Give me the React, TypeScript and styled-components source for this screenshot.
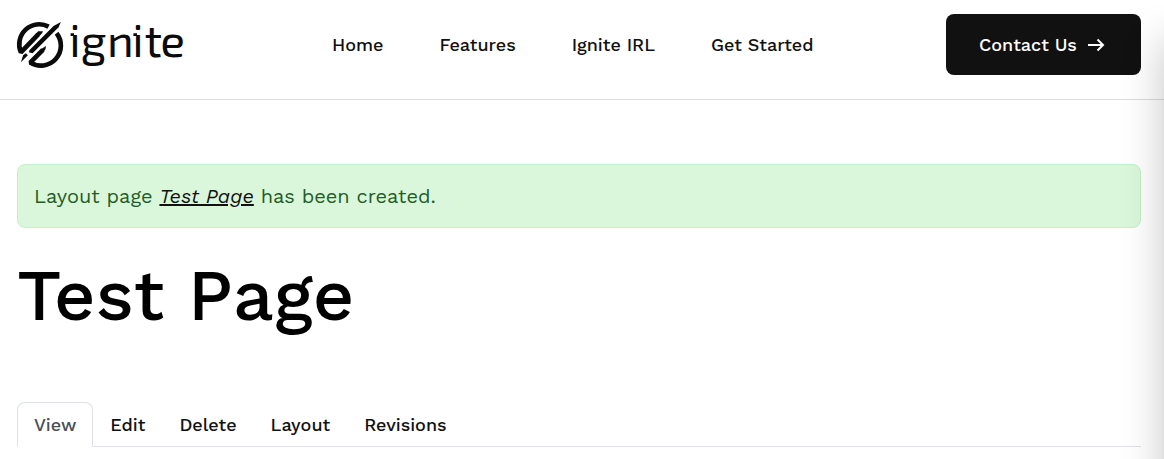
import React from 'react';
import styled, { createGlobalStyle } from 'styled-components';

const Global = createGlobalStyle`
  * { box-sizing: border-box; }
  html, body { margin: 0; height: 100%; overflow: hidden; background: #fff; }
  body { font-family: "Work Sans", "Open Sans", "Liberation Sans", sans-serif; color: #111; }
  a { color: inherit; text-decoration: none; }
`;

const Page = styled.div`
  height: 459px;
  overflow: hidden;
`;

const Header = styled.header`
  display: flex;
  align-items: flex-start;
  height: 100px;
  padding: 14px 23px 0 17px;
  border-bottom: 1px solid #dcdcdc;
`;

const LogoLink = styled.a`
  display: block;
  width: 170px;
  height: 60px;
  svg { display: block; overflow: visible; }
`;

const Nav = styled.nav`
  display: flex;
  gap: 56px;
  margin-left: 145px;
  height: 61px;
  align-items: center;
`;

const Label = styled.a`
  white-space: nowrap;
  font-size: 18px;
  font-weight: 480;
  line-height: 28px;
`;

const Button = styled.a`
  display: flex;
  align-items: center;
  gap: 10px;
  margin-left: auto;
  width: 195px;
  height: 61px;
  padding-left: 33px;
  border-radius: 8px;
  background: #111;
  color: #fff;
`;

const Main = styled.main`
  padding: 64px 23px 0 17px;
`;

const Alert = styled.div`
  height: 64px;
  padding: 0 16px;
  border: 1px solid #c4f0c6;
  border-radius: 8px;
  background: #daf7db;
  color: #235c26;
  font-size: 20px;
  line-height: 63px;
  white-space: nowrap;
`;

const PageLink = styled.a`
  && { color: #111; text-decoration: underline; }
  font-style: italic;
`;

const Title = styled.h1`
  margin: 15px 0 0;
  height: 105px;
  color: #000;
  font-size: 72px;
  font-weight: 500;
  line-height: 105px;
  white-space: nowrap;
`;

const Tabs = styled.div`
  display: flex;
  height: 45px;
  margin-top: 54px;
  border-bottom: 1px solid #dee2e6;
`;

const Tab = styled.div<{ $active?: boolean }>`
  height: 45px;
  padding: 8px 16px;
  border: 1px solid ${p => (p.$active ? '#dee2e6' : 'transparent')};
  border-bottom-color: ${p => (p.$active ? '#fff' : 'transparent')};
  border-radius: 8px 8px 0 0;
  color: ${p => (p.$active ? '#495057' : '#111')};
`;

const SidePanel = styled.aside`
  position: fixed;
  top: 40px;
  left: 1164px;
  width: 400px;
  height: 800px;
  box-shadow: 0 0 40px rgba(0, 0, 0, 0.23);
`;

const Logo = () => (
  <svg width="170" height="60" viewBox="0 0 170 60">
    <g transform="translate(-4.1 3.6) scale(.33333)">
      <g fill="none" stroke="#0b0b0b" strokeWidth="14">
        <path d="M107 27A60 60 0 0 0 24 104L76 50" strokeLinejoin="bevel" />
        <path d="M131 47A60 60 0 0 1 52 135L90 97" strokeLinejoin="bevel" />
      </g>
      <g fill="#0b0b0b">
        <path d="M68 49L76 41L90 41L88 46L80 55Z" />
        <path d="M122 25L144 13L137 29L59 107L48 104L50 97Z" />
        <path d="M84 95L99 85L98 94L93 102Z" />
        <path d="M31 112L39 107L45 113L24 134Z" />
      </g>
    </g>
    <path d="M53.6 20.6H57M116.4 20.6H120" stroke="#0b0b0b" strokeWidth="2.6" />
    <text
      x="52.2 63.8 90 115.2 127.6 143.2"
      y="42.7"
      fontFamily="'Exo 2', Exo, 'Titillium Web', 'Open Sans', sans-serif"
      fontSize="46"
      fontWeight="420"
      fill="#0b0b0b"
    >
      ignite
    </text>
  </svg>
);

const Arrow = () => (
  <svg width="18" height="14" viewBox="0 0 18 14" fill="none" stroke="#fff" strokeWidth="2">
    <path d="M1 7H16M10.5 1.5L16 7L10.5 12.5" />
  </svg>
);

const navItems = ['Home', 'Features', 'Ignite IRL', 'Get Started'];
const tabItems = ['View', 'Edit', 'Delete', 'Layout', 'Revisions'];

export default function App() {
  return (
    <Page>
      <Global />
      <Header>
        <LogoLink href="#"><Logo /></LogoLink>
        <Nav>
          {navItems.map(text => <Label key={text} href="#">{text}</Label>)}
        </Nav>
        <Button href="#">
          <Label as="span">Contact Us</Label>
          <Arrow />
        </Button>
      </Header>
      <Main>
        <Alert>
          Layout page <PageLink href="#">Test Page</PageLink> has been created.
        </Alert>
        <Title>Test Page</Title>
        <Tabs>
          {tabItems.map((text, i) => (
            <Tab key={text} $active={i === 0}><Label as="span">{text}</Label></Tab>
          ))}
        </Tabs>
      </Main>
      <SidePanel />
    </Page>
  );
}
